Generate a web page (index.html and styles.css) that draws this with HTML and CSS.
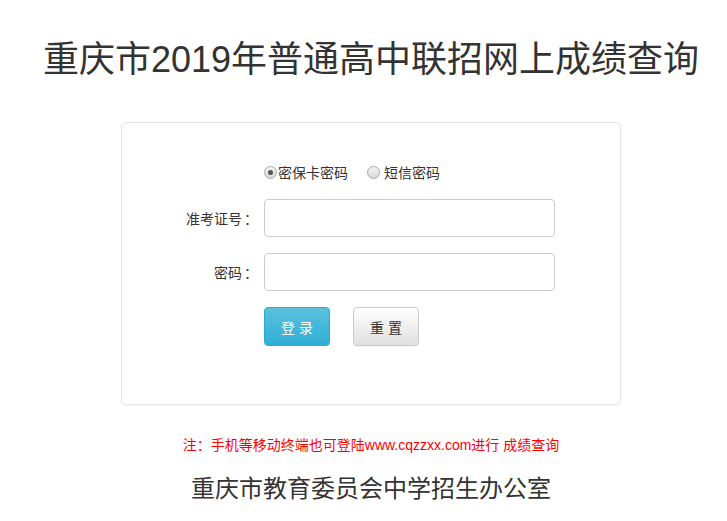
FILE: index.html
```html
<!DOCTYPE html>
<html lang="zh-CN">
<head>
<meta charset="utf-8">
<title>重庆市2019年普通高中联招网上成绩查询</title>
<link rel="stylesheet" href="styles.css">
</head>
<body>
<div class="page">
  <h1 class="title">重庆市2019年普通高中联招网上成绩查询</h1>
  <div class="card">
    <div class="row radios">
      <div class="label"></div>
      <div class="radio-group">
        <label class="radio-item first"><span class="radio checked"></span><span class="rtext">密保卡密码</span></label>
        <label class="radio-item second"><span class="radio"></span><span class="rtext">短信密码</span></label>
      </div>
    </div>
    <div class="row">
      <div class="label">准考证号<span class="colon">：</span></div>
      <div class="input"></div>
    </div>
    <div class="row">
      <div class="label">密码<span class="colon">：</span></div>
      <div class="input"></div>
    </div>
    <div class="row">
      <div class="label"></div>
      <div class="buttons">
        <button class="btn btn-primary">登 录</button>
        <button class="btn btn-default">重 置</button>
      </div>
    </div>
  </div>
  <p class="note">注：手机等移动终端也可登陆www.cqzzxx.com进行 成绩查询</p>
  <p class="footer">重庆市教育委员会中学招生办公室</p>
</div>
</body>
</html>
```

FILE: styles.css
```css
html, body {
  margin: 0;
  padding: 0;
  background: #fff;
}
body {
  font-family: "Liberation Sans", "Noto Sans CJK SC", sans-serif;
  color: #333;
}
.page {
  padding-left: 15px;
  display: flex;
  flex-direction: column;
  align-items: center;
}
.title {
  margin: 40px 0 0 0;
  font-size: 36px;
  line-height: 40px;
  font-weight: normal;
  color: #333;
  white-space: nowrap;
}
.card {
  margin-top: 42px;
  width: 500px;
  box-sizing: border-box;
  border: 1px solid #e3e3e3;
  border-radius: 5px;
  padding: 39px 0 58px 0;
  box-shadow: 0 1px 2px rgba(0,0,0,0.04);
}
.row {
  display: flex;
  align-items: center;
  gap: 8px;
  margin-bottom: 16px;
}
.row:last-child {
  margin-bottom: 0;
}
.row.radios {
  height: 20px;
  margin-bottom: 17px;
}
.label {
  width: 134px;
  flex: none;
  text-align: right;
  font-size: 14px;
  color: #333;
}
.colon {
  display: inline-block;
  width: 12px;
  text-align: center;
  margin-left: 2px;
}
.radio-group {
  display: flex;
  align-items: center;
  font-size: 14px;
  color: #333;
}
.radio-item {
  display: flex;
  align-items: center;
}
.radio-item.second {
  margin-left: 19px;
}
.radio-item.second .radio {
  margin-right: 4px;
}
.radio {
  width: 11px;
  height: 11px;
  border-radius: 50%;
  border: 1px solid #aaa;
  background: linear-gradient(#f4f4f4, #d8d8d8);
  margin-right: 1px;
  position: relative;
  flex: none;
}
.radio.checked::after {
  content: "";
  position: absolute;
  left: 3px;
  top: 3px;
  width: 5px;
  height: 5px;
  border-radius: 50%;
  background: #555;
}
.input {
  width: 291px;
  height: 38px;
  box-sizing: border-box;
  border: 1px solid #ccc;
  border-radius: 4px;
  background: #fff;
}
.buttons {
  display: flex;
  gap: 23px;
}
.btn {
  width: 66px;
  height: 39px;
  box-sizing: border-box;
  border-radius: 4px;
  font-family: "Liberation Sans", "Noto Sans CJK SC", sans-serif;
  font-size: 14px;
  padding: 0;
  cursor: pointer;
}
.btn-primary {
  color: #fff;
  border: 1px solid #2aabd2;
  background: linear-gradient(#5bc0de, #2fafd4);
}
.btn-default {
  color: #333;
  border: 1px solid #ccc;
  background: linear-gradient(#fff, #e0e0e0);
  box-shadow: 0 1px 1px rgba(0,0,0,0.06);
}
.note {
  margin: 30px 0 0 0;
  font-size: 14px;
  line-height: 20px;
  color: #f00;
}
.footer {
  margin: 19px 0 0 0;
  font-size: 24px;
  line-height: 30px;
  color: #333;
}
```
